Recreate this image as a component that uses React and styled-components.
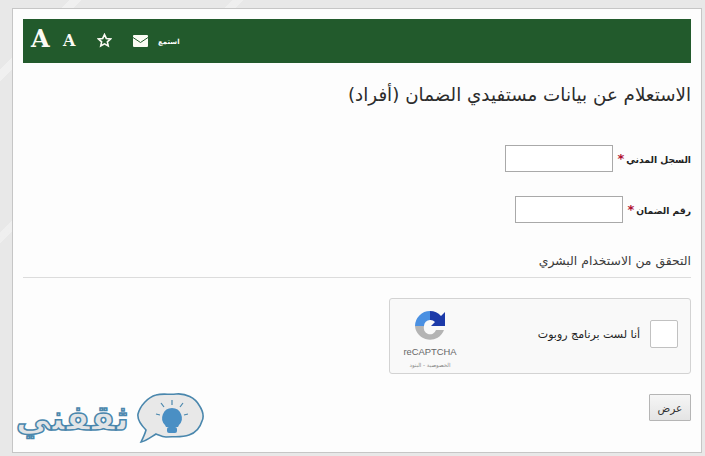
import React from 'react';
import styled, { createGlobalStyle } from 'styled-components';

const Global = createGlobalStyle`
  html, body { margin: 0; padding: 0; }
  body {
    width: 705px; height: 456px; overflow: hidden;
    background:
      linear-gradient(135deg, transparent 0 6%, rgba(255,255,255,.35) 6% 7%, transparent 7% 20%, rgba(255,255,255,.3) 20% 21%, transparent 21%),
      #e8e8e8;
    font-family: "DejaVu Sans", "Liberation Sans", sans-serif;
  }
  * { box-sizing: border-box; }
`;

const Page = styled.div`
  width: 705px; height: 456px; padding: 8px 3px 3px 12px;
`;
const Card = styled.div`
  position: relative; width: 690px; height: 445px;
  background: #fdfdfd; border: 1px solid #c6c6c6;
  padding: 10px 10px 0 10px;
`;
const Toolbar = styled.div`
  height: 44px; background: #225a2c; display: flex; align-items: center;
  padding: 0 0 0 8px; direction: ltr;
`;
const LetterA = styled.span`
  font-family: "DejaVu Serif", "Liberation Serif", serif; font-weight: 700;
  color: #fbfbf4; font-size: ${p => p.$size}px; line-height: 1; width: ${p => p.$w}px;
  margin-top: ${p => p.$mt}px;
`;
const ToolIcon = styled.svg`
  display: block; flex: none; margin-left: ${p => p.$ml}px; margin-top: ${p => p.$mt || 0}px;
`;
const Listen = styled.span`
  color: #fff; font-size: 7px; font-weight: 700; margin-left: 10px; margin-top: 1px;
`;
const Title = styled.h1`
  margin: 19px 0 0; font-size: 18.3px; font-weight: 400; line-height: 26px; color: #2c2c2c; direction: rtl;
`;
const FieldRow = styled.div`
  display: flex; direction: rtl; align-items: center; gap: 4px; height: 27px;
  margin-top: ${p => p.$mt}px;
`;
const FieldLabel = styled.label`
  font-size: 9.2px; font-weight: 700; color: #222; white-space: nowrap;
`;
const Required = styled.span`
  color: #b01030; font-size: 13px; margin-right: 2px;
`;
const TextInput = styled.input`
  width: 108px; height: 27px; background: #fff; border: 1px solid #a9a9a9; padding: 0;
`;
const Section = styled.div`
  margin-top: 22px; height: 33px; border-bottom: 1px solid #dcdcdc; direction: rtl;
  font-size: 12.4px; line-height: 32px; color: #3a3a3a;
`;
const CaptchaWrap = styled.div`
  display: flex; direction: rtl; margin-top: 20px;
`;
const Captcha = styled.div`
  width: 302px; height: 76px; background: #f9f9f9; border: 1px solid #d3d3d3; border-radius: 3px;
  display: flex; align-items: center; padding: 0 12px 0 0; direction: rtl;
`;
const CheckBox = styled.div`
  width: 28px; height: 28px; background: #fff; border: 1px solid #c1c1c1; border-radius: 2px; flex: none;
  margin-bottom: 4px;
`;
const CaptchaText = styled.span`
  font-size: 11px; color: #222; margin-right: 10px; flex: 1; margin-top: -3px;
`;
const CaptchaBrand = styled.div`
  width: 80px; flex: none; display: flex; flex-direction: column; align-items: center; direction: ltr;
  margin-top: 8px;
`;
const BrandName = styled.span`
  font-family: "Liberation Sans", Arial, sans-serif; font-size: 9.4px; color: #666; line-height: 13px; margin-top: 3px;
`;
const BrandLinks = styled.span`
  font-size: 5.5px; color: #888; line-height: 10px; margin-top: 2px; direction: rtl;
`;
const Footer = styled.div`
  display: flex; direction: rtl; margin-top: 20px;
`;
const SubmitButton = styled.button`
  width: 42px; height: 27px; background: linear-gradient(#f6f6f6, #e4e4e4); border: 1px solid #b5b5b5;
  font-family: inherit; font-size: 10.5px; color: #333; padding: 0; border-radius: 1px;
`;
const Logo = styled.div`
  position: absolute; left: 3px; bottom: 8px; display: flex; align-items: center; gap: 8px; direction: ltr;
`;
const LogoWord = styled.span`
  width: 113px; font-size: 35px; line-height: 50px; font-weight: 700; color: #e2e4e6;
  -webkit-text-stroke: 1.5px #4a87ad; direction: rtl; white-space: nowrap;
`;

export default function App() {
  return (
    <>
      <Global />
      <Page>
        <Card>
          <Toolbar>
            <LetterA $size={24} $w={32} $mt={-5}>A</LetterA>
            <LetterA $size={16} $w={21} $mt={-1}>A</LetterA>
            <ToolIcon $ml={13} $mt={-2} width="15" height="15" viewBox="0 0 24 24" fill="none" stroke="#fbfbf4" strokeWidth="2.6">
              <path d="M12 2.5l2.9 6.2 6.7.8-5 4.6 1.4 6.7L12 17.4l-6 3.4 1.4-6.7-5-4.6 6.7-.8z" />
            </ToolIcon>
            <ToolIcon $ml={21} $mt={-1} width="15" height="12" viewBox="0 0 15 12">
              <rect width="15" height="12" rx="1" fill="#fbfbf4" />
              <path d="M0 2.5l7.5 5 7.5-5" fill="none" stroke="#225a2c" strokeWidth="1" />
            </ToolIcon>
            <Listen>استمع</Listen>
          </Toolbar>
          <Title>الاستعلام عن بيانات مستفيدي الضمان (أفراد)</Title>
          <FieldRow $mt={37}>
            <FieldLabel>السجل المدني<Required>*</Required></FieldLabel>
            <TextInput />
          </FieldRow>
          <FieldRow $mt={24}>
            <FieldLabel>رقم الضمان<Required>*</Required></FieldLabel>
            <TextInput />
          </FieldRow>
          <Section>التحقق من الاستخدام البشري</Section>
          <CaptchaWrap>
            <Captcha>
              <CheckBox />
              <CaptchaText>أنا لست برنامج روبوت</CaptchaText>
              <CaptchaBrand>
                <svg width="32" height="32" viewBox="0 0 32 32">
                  <path d="M16 1A15 15 0 0 0 1 16L10 16A6 6 0 0 1 16 10Z" fill="#4a90e2" />
                  <path d="M16 1A15 15 0 0 1 27 6L31 2L31 16L17 16L21 12A6 6 0 0 0 16 10Z" fill="#1c3aa9" />
                  <path d="M1 16L10 16A6 6 0 0 0 22 20L30 20A15 15 0 0 1 1 16Z" fill="#b4b4b4" />
                </svg>
                <BrandName>reCAPTCHA</BrandName>
                <BrandLinks>الخصوصية - البنود</BrandLinks>
              </CaptchaBrand>
            </Captcha>
          </CaptchaWrap>
          <Footer><SubmitButton>عرض</SubmitButton></Footer>
          <Logo>
            <LogoWord>ثقفني</LogoWord>
            <svg width="67" height="52" viewBox="0 0 67 52">
              <path d="M1 22 C3 14 11 5 19 3 C26 1 32 3 39 2 C49 1 58 6 62 13 C66 19 67 25 65 29 C63 36 58 41 52 43 C44 46 36 44 29 45 C25 45 22 43 19 42 C14 45 9 49 4 50 C6 46 8 42 9 38 C5 34 0 28 1 22 Z" fill="#e8e8e8" stroke="#4a87ad" strokeWidth="1.6" />
              <path d="M35 16 a10 10 0 0 1 7 17 l-1 2 h-12 l-1-2 a10 10 0 0 1 7-17z" fill="#4a8fc4" />
              <rect x="30" y="35" width="10" height="6" rx="2" fill="#4a8fc4" />
              <path d="M35 8v5M24 11l3 4M46 11l-3 4M19 22l4 1M51 22l-4 1" stroke="#4a87ad" strokeWidth="1.2" />
            </svg>
          </Logo>
        </Card>
      </Page>
    </>
  );
}
